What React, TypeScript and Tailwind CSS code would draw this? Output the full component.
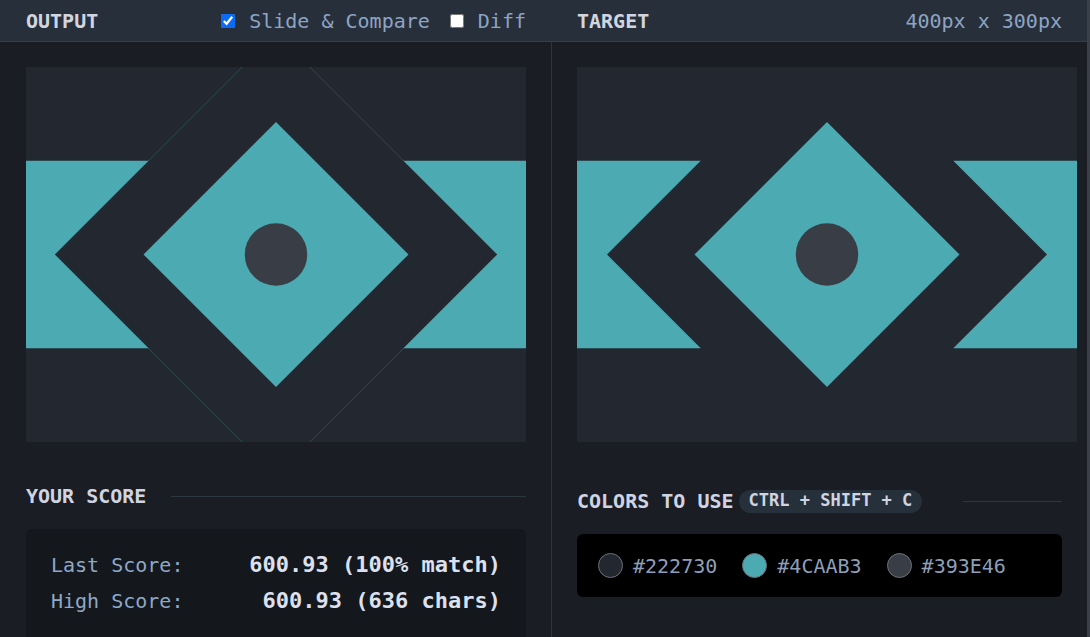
import React from "react";

const swatches = ["#222730", "#4CAAB3", "#393E46"];

const Canvas: React.FC<{ mode: "output" | "target" }> = ({ mode }) => (
    <svg width={500} height={375} viewBox="0 0 400 300" className="block shrink-0">
        <rect width="400" height="300" fill="#222730" />
        {mode === "output" ? (
            <>
                <rect x="0" y="75" width="400" height="150" fill="#4CAAB3" />
                <polygon
                    points="200,-27 377,150 200,327 23,150"
                    fill="#222730"
                    stroke="#4CAAB3"
                    strokeOpacity={0.4}
                    strokeWidth={0.6}
                />
            </>
        ) : (
            <>
                <polygon points="0,75 99,75 24,150 99,225 0,225" fill="#4CAAB3" />
                <polygon points="400,75 301,75 376,150 301,225 400,225" fill="#4CAAB3" />
            </>
        )}
        <polygon points="200,44 306,150 200,256 94,150" fill="#4CAAB3" />
        <circle cx="200" cy="150" r="25" fill="#393E46" />
    </svg>
);

export default function App() {
    return (
        <div className="flex h-[637px] w-[1090px] overflow-hidden bg-[#1a1d24] font-['DejaVu_Sans_Mono','Liberation_Mono',monospace] text-[20px]">
            <div className="flex w-[1087px] shrink-0 flex-col">
                {/* header */}
                <div className="flex h-[42px] shrink-0 border-b border-[#343d48] bg-[#27303a]">
                    <div className="flex w-[552px] shrink-0 items-center justify-between pl-[26px] pr-[26px]">
                        <span className="font-bold text-[#d1d5e0]">OUTPUT</span>
                        <div className="flex items-center text-[#8ea4c4]">
                            <input type="checkbox" defaultChecked className="m-0 h-[14px] w-[14px] accent-[#0a6cf5]" />
                            <span className="ml-[14px]">Slide &amp; Compare</span>
                            <input type="checkbox" className="m-0 ml-[20px] h-[14px] w-[14px]" />
                            <span className="ml-[14px]">Diff</span>
                        </div>
                    </div>
                    <div className="flex w-[535px] shrink-0 items-center justify-between pl-[25px] pr-[25px]">
                        <span className="font-bold text-[#d1d5e0]">TARGET</span>
                        <span className="text-[#8ea4c4]">400px x 300px</span>
                    </div>
                </div>

                {/* body */}
                <div className="flex min-h-0 flex-1">
                    {/* output side */}
                    <div className="flex w-[552px] shrink-0 flex-col border-r border-[#2c333d] pl-[26px] pr-[25px] pt-[25px]">
                        <Canvas mode="output" />
                        <div className="mt-[42px] flex h-[24px] items-center">
                            <span className="font-bold text-[#d0d4e0]">YOUR SCORE</span>
                            <div className="ml-[25px] h-px flex-1 bg-[#2e3640]" />
                        </div>
                        <div className="mt-[21px] flex-1 rounded-t-[6px] bg-[#14171c] px-[25px] pt-[18px]">
                            <div className="grid grid-cols-[auto_1fr] leading-[36px]">
                                <span className="text-[#8ea8c8]">Last Score:</span>
                                <span className="text-right text-[22px] font-bold text-[#dde0ee]">600.93 (100% match)</span>
                                <span className="text-[#8ea8c8]">High Score:</span>
                                <span className="text-right text-[22px] font-bold text-[#dde0ee]">600.93 (636 chars)</span>
                            </div>
                        </div>
                    </div>

                    {/* target side */}
                    <div className="flex w-[535px] shrink-0 flex-col pl-[25px] pr-[25px] pt-[25px]">
                        <Canvas mode="target" />
                        <div className="mt-[47px] flex h-[24px] items-center">
                            <span className="font-bold text-[#d0d4e0]">COLORS TO USE</span>
                            <span className="ml-[5px] flex h-[23px] items-center rounded-full bg-[#26303a] px-[10px] text-[17px] font-bold text-[#d0d4e0]">
                                CTRL + SHIFT + C
                            </span>
                            <div className="ml-[41px] h-px flex-1 bg-[#2e3640]" />
                        </div>
                        <div className="mt-[21px] flex h-[63px] items-center gap-[25px] rounded-[6px] bg-black pl-[21px]">
                            {swatches.map((c) => (
                                <div key={c} className="flex items-center gap-[10px]">
                                    <span
                                        className="h-[25px] w-[25px] rounded-full border border-[#6c717a]"
                                        style={{ backgroundColor: c }}
                                    />
                                    <span className="text-[#8d9fb9]">{c}</span>
                                </div>
                            ))}
                        </div>
                    </div>
                </div>
            </div>
            <div className="w-[3px] shrink-0 bg-[#3a4047]" />
        </div>
    );
}
